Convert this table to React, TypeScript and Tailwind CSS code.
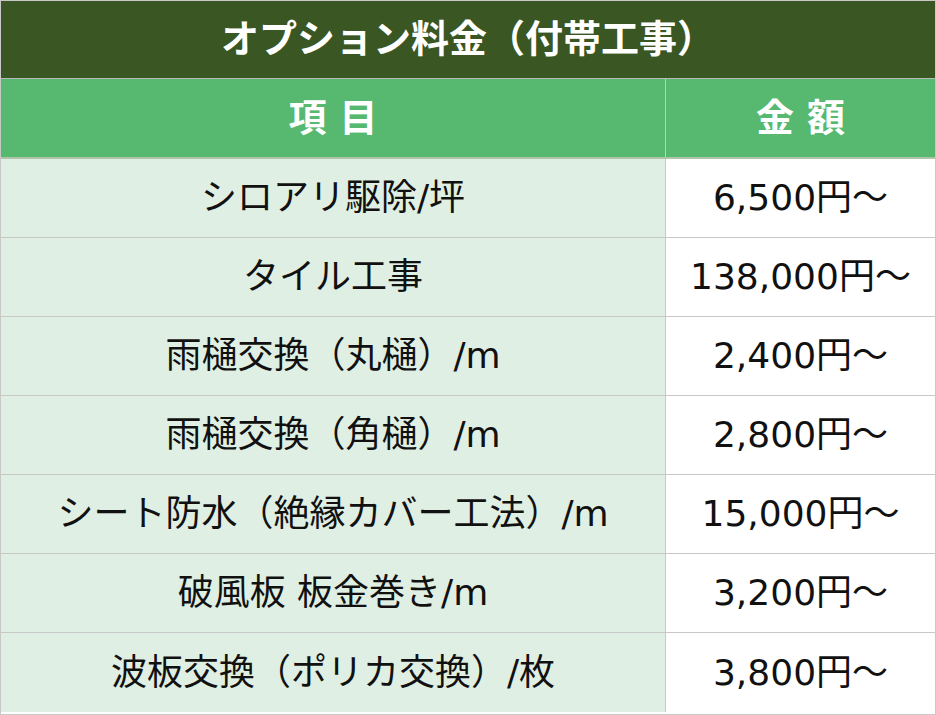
import React from "react";

const rows: [string, string][] = [
  ["シロアリ駆除/坪", "6,500円～"],
  ["タイル工事", "138,000円～"],
  ["雨樋交換（丸樋）/m", "2,400円～"],
  ["雨樋交換（角樋）/m", "2,800円～"],
  ["シート防水（絶縁カバー工法）/m", "15,000円～"],
  ["破風板 板金巻き/m", "3,200円～"],
  ["波板交換（ポリカ交換）/枚", "3,800円～"],
];

export default function App() {
  return (
    <div
      className="w-[936px] h-[715px] bg-white border border-[#c8c8c8] flex flex-col"
      style={{ fontFamily: '"DejaVu Sans", "Noto Sans CJK JP", sans-serif' }}
    >
      <div className="h-[78px] shrink-0 bg-[#3a5623] flex items-center justify-center text-white font-bold text-[38px] border-b border-[#b8b8b8]">
        オプション料金（付帯工事）
      </div>
      <div className="h-[80px] shrink-0 bg-[#57b870] grid grid-cols-[665px_1fr] border-b-2 border-[#b0c4a8] text-white font-bold text-[38px]">
        <div className="flex items-center justify-center border-r border-[#c8c8c8]">項 目</div>
        <div className="flex items-center justify-center">金 額</div>
      </div>
      {rows.map(([a, b], i) => (
        <div
          key={i}
          className={`h-[79px] shrink-0 grid grid-cols-[665px_1fr] text-[36px] text-[#111] ${i < rows.length - 1 ? "border-b-[1px] border-[#c8c8c8]" : ""}`}
        >
          <div className="bg-[#e0efe3] flex items-center justify-center border-r border-[#c8c8c8]">{a}</div>
          <div className="bg-white flex items-center justify-center">{b}</div>
        </div>
      ))}
    </div>
  );
}
